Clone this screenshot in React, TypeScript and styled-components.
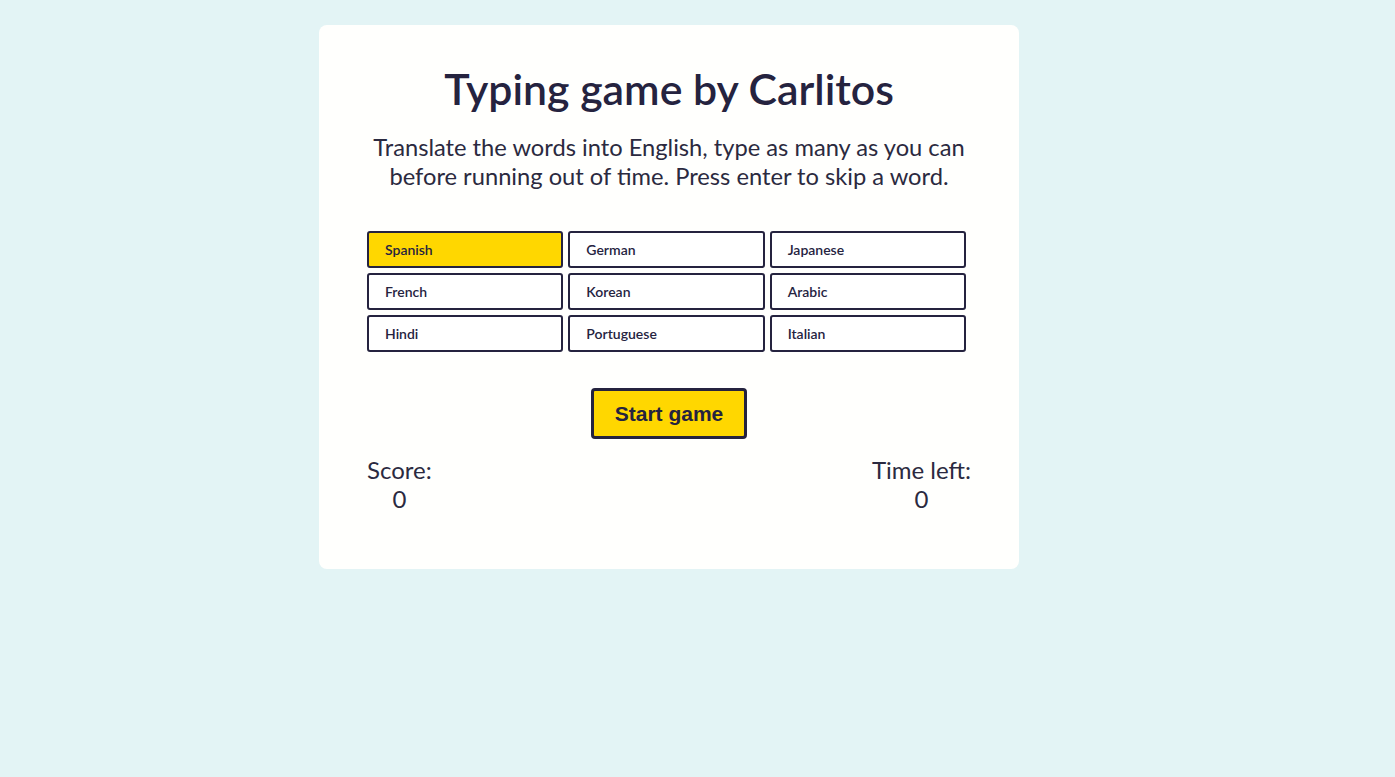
import React, { useState } from "react";
import styled, { createGlobalStyle } from "styled-components";

const Global = createGlobalStyle`
  html, body { margin: 0; padding: 0; background: #e3f4f5; }
  body { font-family: Lato, "Noto Sans", sans-serif; color: #25233f; }
`;

const Page = styled.main`
  display: flex;
  align-items: flex-start;
  justify-content: flex-start;
  padding: 25px 0 0 319px;
  min-height: 777px;
  box-sizing: border-box;
`;

const Card = styled.section`
  width: 700px;
  box-sizing: border-box;
  background: #fffffd;
  border-radius: 8px;
  padding: 38px 48px 56px;
  display: flex;
  flex-direction: column;
  align-items: stretch;
`;

const Title = styled.h1`
  margin: 0;
  font-size: 42.8px;
  font-weight: 600;
  line-height: 51px;
  text-align: center;
  color: #25233f;
`;

const Lead = styled.p`
  margin: 19px 0 0;
  font-size: 23.7px;
  line-height: 29px;
  text-align: center;
  color: #2b2a40;
`;

const Grid = styled.div`
  margin-top: 40px;
  width: 599px;
  display: grid;
  grid-template-columns: repeat(3, 1fr);
  gap: 5px;
`;

const Lang = styled.button<{ $active?: boolean }>`
  height: 37px;
  box-sizing: border-box;
  border: 2px solid #25233f;
  border-radius: 3px;
  background: ${(p) => (p.$active ? "#ffd700" : "#ffffff")};
  color: #25233f;
  font-family: Lato, "Noto Sans", sans-serif;
  font-size: 14px;
  font-weight: 600;
  text-align: left;
  padding: 0 0 0 16px;
  cursor: pointer;
`;

const StartRow = styled.div`
  display: flex;
  justify-content: center;
  margin-top: 36px;
`;

const Start = styled.button`
  width: 156px;
  height: 51px;
  box-sizing: border-box;
  border: 3px solid #25233f;
  border-radius: 4px;
  background: #ffd700;
  color: #25233f;
  font-family: "Liberation Sans", Arial, sans-serif;
  font-size: 21px;
  font-weight: 700;
  cursor: pointer;
`;

const Stats = styled.div`
  margin-top: 16px;
  display: flex;
  justify-content: space-between;
`;

const Stat = styled.div`
  display: flex;
  flex-direction: column;
  align-items: center;
  font-size: 24px;
  line-height: 29px;
  color: #2b2a40;
`;

const langs = [
  "Spanish",
  "German",
  "Japanese",
  "French",
  "Korean",
  "Arabic",
  "Hindi",
  "Portuguese",
  "Italian",
];

export default function App() {
  const [active, setActive] = useState("Spanish");
  return (
    <>
      <Global />
      <Page>
        <Card>
          <Title>Typing game by Carlitos</Title>
          <Lead>
            Translate the words into English, type as many as you can before
            running out of time. Press enter to skip a word.
          </Lead>
          <Grid>
            {langs.map((l) => (
              <Lang key={l} $active={l === active} onClick={() => setActive(l)}>
                {l}
              </Lang>
            ))}
          </Grid>
          <StartRow>
            <Start>Start game</Start>
          </StartRow>
          <Stats>
            <Stat>
              <span>Score:</span>
              <span>0</span>
            </Stat>
            <Stat>
              <span>Time left:</span>
              <span>0</span>
            </Stat>
          </Stats>
        </Card>
      </Page>
    </>
  );
}
